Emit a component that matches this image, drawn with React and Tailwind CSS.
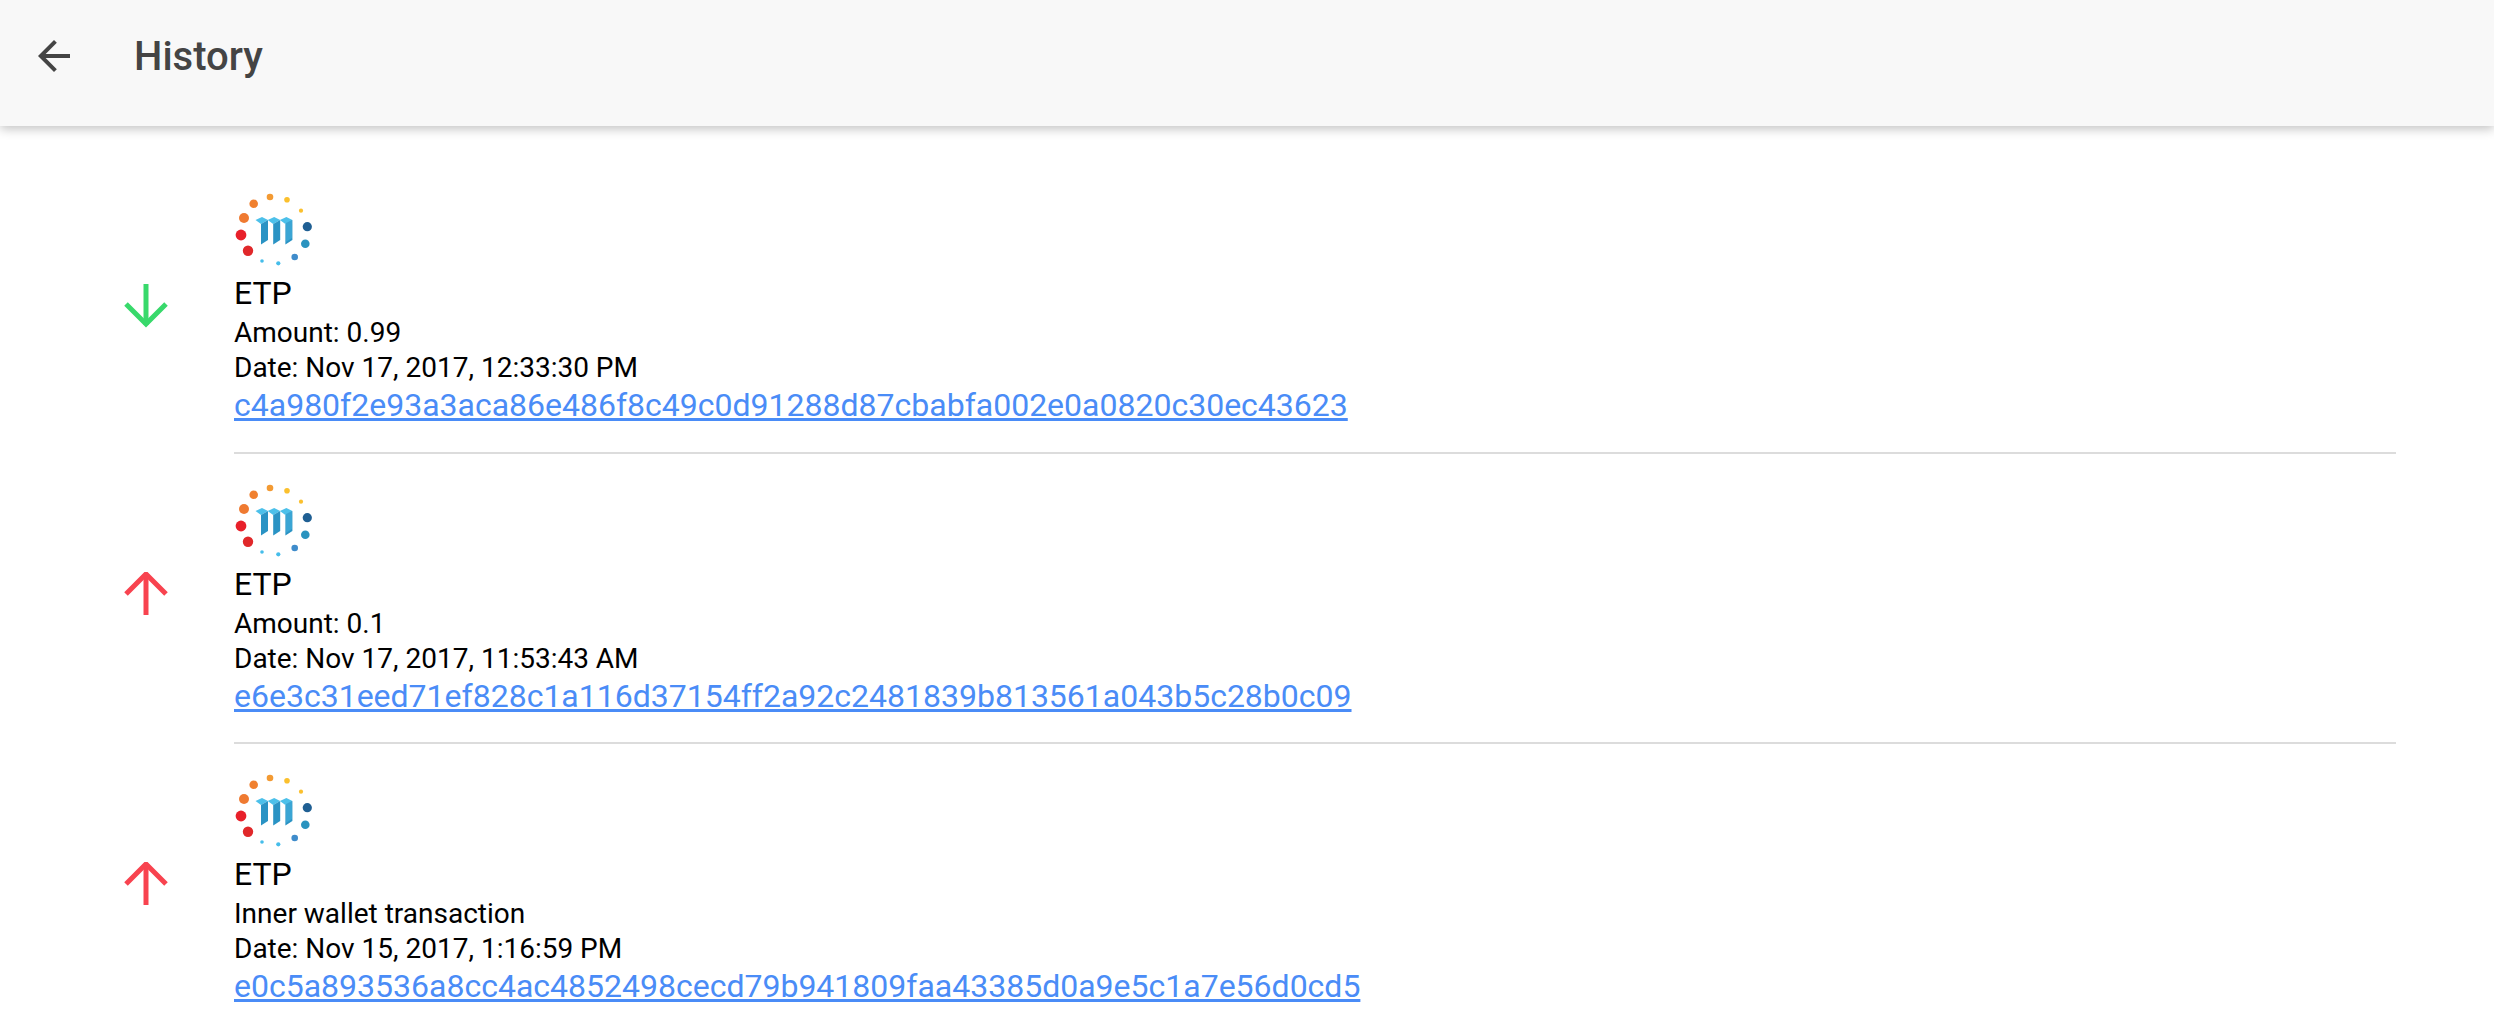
const rows = [
  { up: false, line: "Amount: 0.99", date: "Date: Nov 17, 2017, 12:33:30 PM", hash: "c4a980f2e93a3aca86e486f8c49c0d91288d87cbabfa002e0a0820c30ec43623" },
  { up: true, line: "Amount: 0.1", date: "Date: Nov 17, 2017, 11:53:43 AM", hash: "e6e3c31eed71ef828c1a116d37154ff2a92c2481839b813561a043b5c28b0c09" },
  { up: true, line: "Inner wallet transaction", date: "Date: Nov 15, 2017, 1:16:59 PM", hash: "e0c5a893536a8cc4ac4852498cecd79b941809faa43385d0a9e5c1a7e56d0cd5" },
];

const dots = [
  [31, 55, 5.4, "#e8202a"], [38, 70.7, 5.2, "#e0282a"], [34, 38, 5, "#ef7a31"], [43.7, 23.7, 4.3, "#f0802f"],
  [60, 17, 3.3, "#f39a33"], [77, 19.7, 2.8, "#fbc02d"], [91, 30.7, 2.1, "#fbc02d"], [97.3, 46.7, 4.6, "#1f5f93"],
  [95.3, 63.7, 4.3, "#2a93bf"], [84.7, 77, 3.3, "#3f8ccb"], [68.3, 83.3, 2.1, "#45bdea"], [52, 81, 1.8, "#45bdea"],
];

function Logo() {
  return (
    <svg width="120" height="100" viewBox="0 0 120 100" className="block -ml-6 -mb-[6px]">
      {dots.map((d, i) => <circle key={i} cx={d[0]} cy={d[1]} r={d[2]} fill={d[3]} />)}
      {[0, 1, 2].map((i) => (
        <g key={i} transform={`translate(${i * 12.2} 0)`}>
          <path d="M45.5 40 L52 37 L58 40 L51 44 Z" fill="#4cc0ea" />
          <path d="M51 44 L58 40 L58 60 L51 64.5 Z" fill="#2a93c4" />
        </g>
      ))}
      <path d="M82 40 L82 58 L76 62 L76 43 Z" fill="#3aa5d4" />
    </svg>
  );
}

function Arrow({ up }) {
  const color = up ? "#f8434f" : "#38d96b";
  return (
    <svg width="48" height="48" viewBox="0 0 48 48" fill="none" stroke={color} strokeWidth="5" className="block">
      {up ? (
        <>
          <path d="M24 2V43" />
          <path d="M4 22L24 2L44 22" />
        </>
      ) : (
        <>
          <path d="M24 3V44" />
          <path d="M4 23L24 43L44 23" />
        </>
      )}
    </svg>
  );
}

export default function App() {
  return (
    <div className="min-h-[1032px] bg-white font-['Roboto',sans-serif] overflow-hidden">
      <header className="h-[126px] bg-[#f8f8f8] flex items-center pl-[30px] pb-[14px] shadow-[0_3px_10px_rgba(0,0,0,0.24)]">
        <svg width="48" height="48" viewBox="0 0 24 24" fill="#444444" className="block mr-[56px]">
          <path d="M20 11H7.83l5.59-5.59L12 4l-8 8 8 8 1.41-1.41L7.83 13H20v-2z" />
        </svg>
        <h1 className="text-[40px] leading-none font-medium text-[#444444] relative top-[1px]">History</h1>
      </header>
      <main className="pt-[37px] pl-[122px] pr-[98px]">
        {rows.map((r, i) => (
          <div key={i} className="flex items-center">
            <div className="w-[112px] shrink-0 pb-[6px]"><Arrow up={r.up} /></div>
            <div className="flex-1 h-[290.5px] border-b-2 border-[#dcdcdc] pt-[17px]">
              <Logo />
              <div className="text-[32px] leading-[38px] text-black">ETP</div>
              <div className="text-[28px] leading-[35px] text-black mt-[3px]">{r.line}</div>
              <div className="text-[28px] leading-[35px] text-black">{r.date}</div>
              <a href="#" className="block text-[32px] leading-[40px] text-[#4a8cf7] underline">{r.hash}</a>
            </div>
          </div>
        ))}
      </main>
    </div>
  );
}
